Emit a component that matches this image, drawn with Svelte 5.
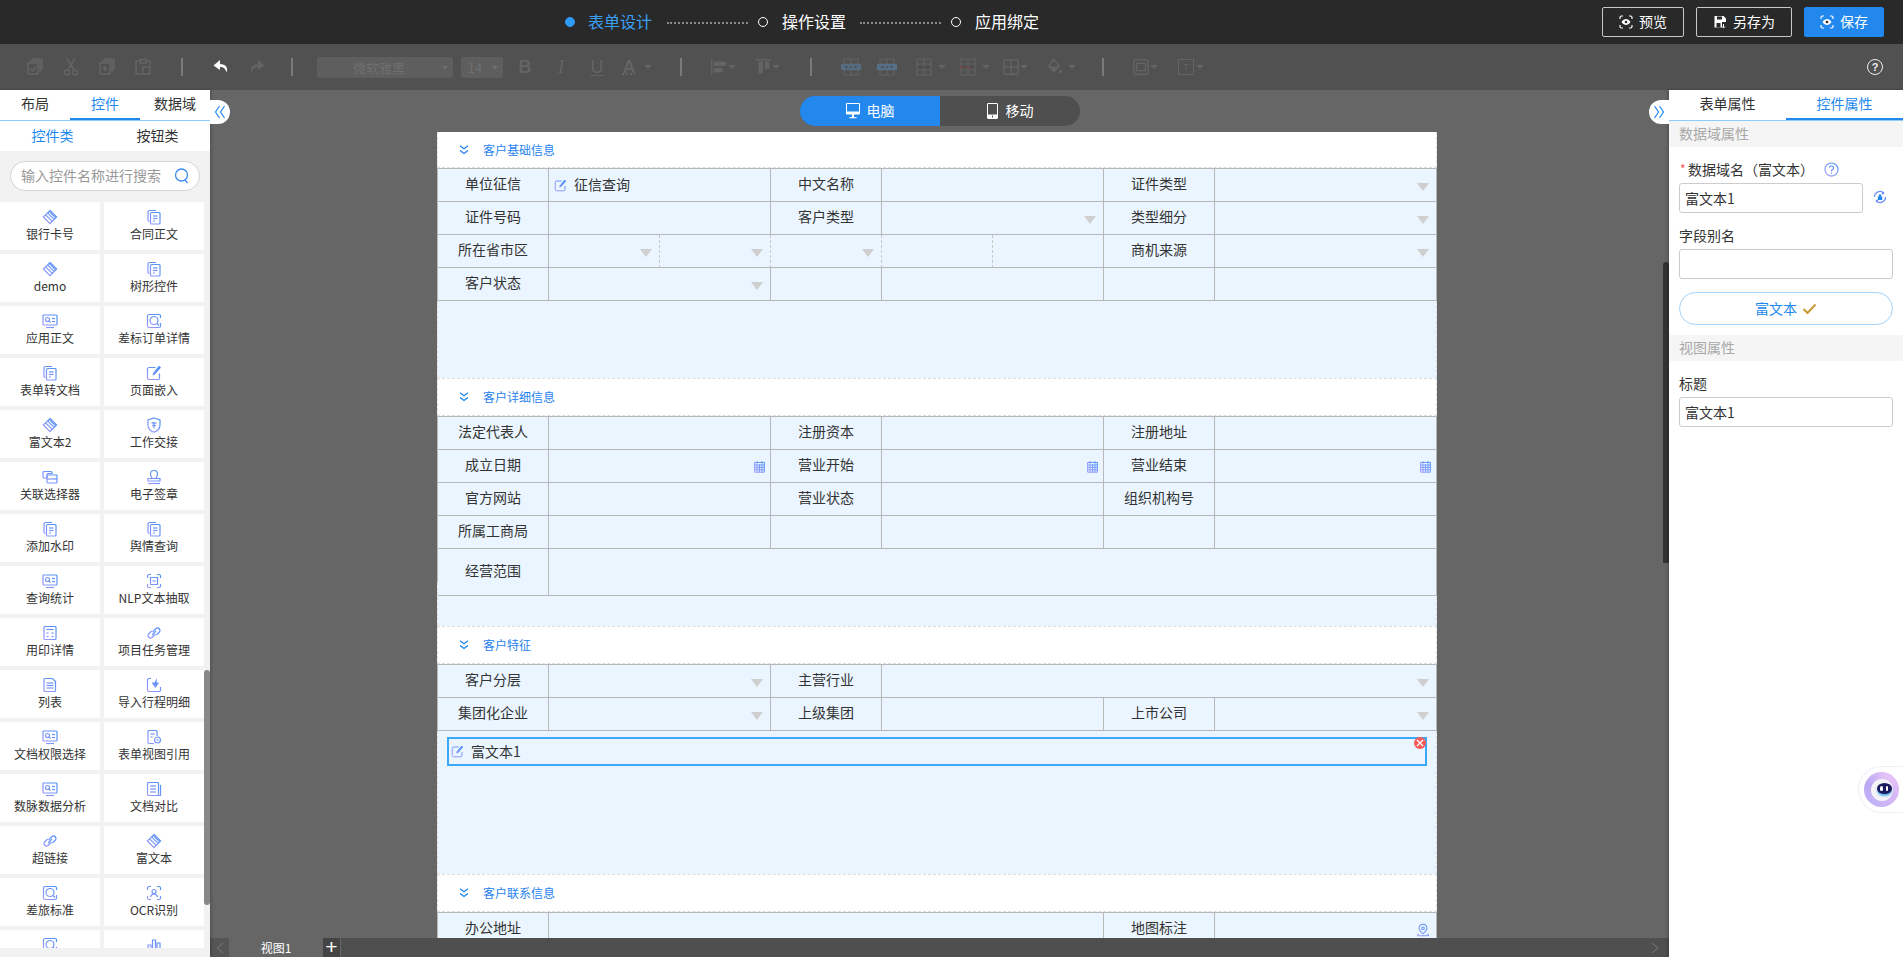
<script>
  const c = (x, y, r) => `M${x - r} ${y}a${r} ${r} 0 1 0 ${r * 2} 0a${r} ${r} 0 1 0 ${-r * 2} 0Z`;

  const icons = {
    gem: { s: ['M8 1.500 14.600 8 8 14.600 1.400 8Z', 'M5.600 3.900 12.100 10.400', 'M3.700 5.800 10.200 12.300', 'M7.200 2.400 13.600 8.800'] },
    doc: { s: ['M2 10V3a1.500 1.500 0 0 1 1.500-1.500H10', 'M2 10v1a1.500 1.500 0 0 0 1.500 1.500', 'M5.500 3.500h7.500a1 1 0 0 1 1 1V14a1 1 0 0 1-1 1H5.500a1 1 0 0 1-1-1V4.500a1 1 0 0 1 1-1Z', 'M7 7h4.500', 'M7 9.500h4.500', 'M7 12h2'] },
    idcard: { s: ['M2 2h12a1 1 0 0 1 1 1v8a1 1 0 0 1-1 1H2a1 1 0 0 1-1-1V3a1 1 0 0 1 1-1Z', c(5.500, 6.500, 2), 'M7 8l1.500 1.500', 'M10 5.500h3', 'M10 8.500h3', 'M4 14.500h8'] },
    find: { s: ['M5 1.500H3A1.500 1.500 0 0 0 1.500 3v10A1.500 1.500 0 0 0 3 14.500h10a1.500 1.500 0 0 0 1.500-1.500v-3', 'M5 1.500h8A1.500 1.500 0 0 1 14.500 3v2', c(8, 7.500, 4), 'M11 10.500l2 2'] },
    edit: { s: ['M13.500 8.500V13a1.500 1.500 0 0 1-1.500 1.500H3A1.500 1.500 0 0 1 1.500 13V4A1.500 1.500 0 0 1 3 2.500h6.500'], f: ['M13 .8 15 2.600 9 9.500 6.500 10.500 7 8Z'] },
    shield: { s: ['M8 1 14 3v5c0 3.500-2.500 6-6 7.200C4.500 14 2 11.500 2 8V3Z', 'M5.500 6h5', 'M6 8.500h4', 'M8 5v6.500'] },
    pair: { s: ['M2 2.500h7a1 1 0 0 1 1 1v1H6a1 1 0 0 0-1 1V9H2a1 1 0 0 1-1-1V3.500a1 1 0 0 1 1-1Z', 'M6 6h8.500a.5.5 0 0 1 .5.5V13a1 1 0 0 1-1 1H6a1 1 0 0 1-1-1V7a1 1 0 0 1 1-1Z', 'M5 10h10'] },
    stamp: { s: ['M6 9.500C6 8 4.500 7.500 4.500 5a3.500 3.500 0 0 1 7 0C11.500 7.500 10 8 10 9.500', 'M2 9.500h12v2.500H2Z', 'M2 14.500h12'] },
    scan: { s: ['M1.500 5V3A1.500 1.500 0 0 1 3 1.500h2', 'M11 1.500h2A1.500 1.500 0 0 1 14.500 3v2', 'M1.500 11v2A1.500 1.500 0 0 0 3 14.500h2', 'M14.500 11v2a1.500 1.500 0 0 1-1.500 1.500h-2', 'M4.500 4.500h7v7h-7Z', 'M6.500 8h3'] },
    calc: { s: ['M3 1.500h10a1 1 0 0 1 1 1v11a1 1 0 0 1-1 1H3a1 1 0 0 1-1-1v-11a1 1 0 0 1 1-1Z', 'M4.500 4.500h7', 'M4.500 8h2', 'M9.500 8h2', 'M4.500 11.500h2', 'M9.500 11.500h2'] },
    link: { s: ['M6.500 7 10 3.500a2.500 2.500 0 0 1 3.500 3.500L10.500 10', 'M9.500 9 6 12.500A2.500 2.500 0 0 1 2.500 9L5.500 6', 'M6 10l4-4'] },
    list: { s: ['M3 1.500h7.500l3 3V13.500a1 1 0 0 1-1 1H3a1 1 0 0 1-1-1v-11a1 1 0 0 1 1-1Z', 'M4.500 6h7', 'M4.500 8.500h7', 'M4.500 11h7'] },
    imp: { s: ['M5 1.500H3A1.500 1.500 0 0 0 1.500 3v10A1.500 1.500 0 0 0 3 14.500h10a1.500 1.500 0 0 0 1.500-1.500v-3'], f: ['M11 1 8.500 5.500H5.500L9.500 11l3.500-5.500H10.500Z'] },
    ref: { s: ['M3 1.500h7a1 1 0 0 1 1 1V7', 'M3 1.500a1 1 0 0 0-1 1v11a1 1 0 0 0 1 1h5', 'M4.500 5h4', 'M4.500 8h2', c(11.500, 11, 3), 'M10.500 11h2'] },
    lines: { s: ['M2.500 1.500h9a1 1 0 0 1 1 1v11a1 1 0 0 1-1 1h-9a1 1 0 0 1-1-1v-11a1 1 0 0 1 1-1Z', 'M14.500 4v10.500H5', 'M4 5h6', 'M4 8h6', 'M4 11h6'] },
    ocr: { s: ['M1.500 5V3A1.500 1.500 0 0 1 3 1.500h2', 'M11 1.500h2A1.500 1.500 0 0 1 14.500 3v2', 'M1.500 11v2A1.500 1.500 0 0 0 3 14.500h2', 'M14.500 11v2a1.500 1.500 0 0 1-1.500 1.500h-2', c(8, 6.500, 2), 'M4.500 12c.5-2 2-3 3.500-3s3 1 3.500 3'] },
    chart: { s: ['M2 15V8h3v7', 'M6.500 15V3h3v12', 'M11 15V6h3v9', 'M1 15h14'] },
    calendar: { s: ['M2 3h12v12H2Z', 'M2 6h12', 'M5 1.500v3', 'M11 1.500v3', 'M5 6v9', 'M8 6v9', 'M11 6v9', 'M2 9h12', 'M2 12h12'] },
    pin: { s: ['M8 1.500a4.500 4.500 0 0 1 4.500 4.500c0 2.500-2.500 4.500-4.500 6.500C6 10.500 3.500 8.500 3.500 6A4.500 4.500 0 0 1 8 1.500Z', c(8, 6, 1.500), 'M3 12.500C2 13 1.500 13.500 2 14.500h12c.5-1-.0-1.500-1-2'] },
    help: { s: [c(8, 8, 7), 'M5.800 6.200A2.200 2.200 0 1 1 8 8.600V10'], f: [c(8, 12, .8)] }
  };

  const leftItems = [
    ['银行卡号', 'gem'], ['合同正文', 'doc'],
    ['demo', 'gem'], ['树形控件', 'doc'],
    ['应用正文', 'idcard'], ['差标订单详情', 'find'],
    ['表单转文档', 'doc'], ['页面嵌入', 'edit'],
    ['富文本2', 'gem'], ['工作交接', 'shield'],
    ['关联选择器', 'pair'], ['电子签章', 'stamp'],
    ['添加水印', 'doc'], ['舆情查询', 'doc'],
    ['查询统计', 'idcard'], ['NLP文本抽取', 'scan'],
    ['用印详情', 'calc'], ['项目任务管理', 'link'],
    ['列表', 'list'], ['导入行程明细', 'imp'],
    ['文档权限选择', 'idcard'], ['表单视图引用', 'ref'],
    ['数脉数据分析', 'idcard'], ['文档对比', 'lines'],
    ['超链接', 'link'], ['富文本', 'gem'],
    ['差旅标准', 'find'], ['OCR识别', 'ocr'],
    ['', 'find'], ['', 'chart']
  ];

  const L = (t) => ({ t, kind: 'label', span: 1 });
  const V = (span = 2, deco = '', text = '', dashed = false) => ({ kind: 'value', span, deco, text, dashed });

  const sections = [
    {
      title: '客户基础信息', first: true,
      rows: [
        L('单位征信'), V(2, '', '征信查询'), L('中文名称'), V(), L('证件类型'), V(2, 'tri'),
        L('证件号码'), V(), L('客户类型'), V(2, 'tri'), L('类型细分'), V(2, 'tri'),
        L('所在省市区'), V(1, 'tri', '', true), V(1, 'tri', '', true), V(1, 'tri', '', true), V(1, '', '', true), V(1), L('商机来源'), V(2, 'tri'),
        L('客户状态'), V(2, 'tri'), V(1), V(2), V(1), V(2)
      ]
    },
    {
      title: '客户详细信息',
      rows: [
        L('法定代表人'), V(), L('注册资本'), V(), L('注册地址'), V(),
        L('成立日期'), V(2, 'calendar'), L('营业开始'), V(2, 'calendar'), L('营业结束'), V(2, 'calendar'),
        L('官方网站'), V(), L('营业状态'), V(), L('组织机构号'), V(),
        L('所属工商局'), V(), V(1), V(2), V(1), V(2),
        { t: '经营范围', kind: 'label', span: 1, tall: true }, { kind: 'value', span: 8, tall: true }
      ]
    },
    {
      title: '客户特征', selected: true,
      rows: [
        L('客户分层'), V(2, 'tri'), L('主营行业'), V(5, 'tri'),
        L('集团化企业'), V(2, 'tri'), L('上级集团'), V(), L('上市公司'), V(2, 'tri')
      ]
    },
    {
      title: '客户联系信息',
      rows: [L('办公地址'), V(5), L('地图标注'), V(2, 'pin')]
    }
  ];
</script>

{#snippet icon(name, size = 16)}
  <svg class="ic" width={size} height={size} viewBox="0 0 16 16" aria-hidden="true">
    {#each icons[name].s as d}
      <path {d} fill="none" stroke="url(#ig)" stroke-width="1.200" />
    {/each}
    {#each icons[name].f ?? [] as d}
      <path {d} fill="url(#ig)" />
    {/each}
  </svg>
{/snippet}

{#snippet scanEye()}
  <svg width="14" height="14" viewBox="0 0 14 14" fill="none" stroke="currentColor" stroke-width="1.200" aria-hidden="true">
    <path d="M1 4V2.500A1.500 1.500 0 0 1 2.500 1H4M10 1h1.500A1.500 1.500 0 0 1 13 2.500V4M1 10v1.500A1.500 1.500 0 0 0 2.500 13H4M10 13h1.500a1.500 1.500 0 0 0 1.500-1.500V10" />
    <path d="M2.500 7C4 4.800 5.500 4 7 4s3 .8 4.500 3C10 9.200 8.500 10 7 10S4 9.200 2.500 7Z" fill="currentColor" stroke="none" />
    <circle cx="7" cy="7" r="1.300" fill="#292929" stroke="none" />
  </svg>
{/snippet}

{#snippet caret(far = false)}
  <span class="caret" class:far></span>
{/snippet}

{#snippet tool(paths, fills = [], size = 20)}
  <svg width={size} height={size} viewBox="0 0 20 20" aria-hidden="true">
    {#each paths as d}<path {d} fill="none" stroke="#646464" stroke-width="1.500" />{/each}
    {#each fills as d}<path {d} fill="#646464" />{/each}
  </svg>
{/snippet}

{#snippet tableTool(band = '', cells = '')}
  <svg width="20" height="18" viewBox="0 0 20 18" aria-hidden="true">
    <path d="M3 1h14v16H3Z M3 6h14 M3 12h14 M10 1v16" fill="none" stroke="#636363" stroke-width="1.200" />
    {#if band}<path d="M0 6h20v6H0Z" fill={band} />{/if}
    {#if cells}<path d="M2 8h4v2H2Z M8 8h4v2H8Z" fill={cells} />{/if}
    <path d="M4 9h3 M9 9h2 M13 9h3" stroke="#454545" stroke-width="1.200" />
  </svg>
{/snippet}

<svg class="defs" width="0" height="0" aria-hidden="true">
  <defs>
    <linearGradient id="ig" gradientUnits="userSpaceOnUse" x1="0" y1="16" x2="16" y2="0">
      <stop offset="0" stop-color="#a99cff" />
      <stop offset="1" stop-color="#3c8df5" />
    </linearGradient>
  </defs>
</svg>

<div class="app">
  <header class="top">
    <div class="steps">
      <span class="dot on"></span>
      <span class="step on">表单设计</span>
      <span class="dash"></span>
      <span class="dot"></span>
      <span class="step">操作设置</span>
      <span class="dash"></span>
      <span class="dot"></span>
      <span class="step">应用绑定</span>
    </div>
    <div class="actions">
      <button class="btn b1">{@render scanEye()}<span>预览</span></button>
      <button class="btn b2">
        <svg width="14" height="14" viewBox="0 0 14 14" aria-hidden="true">
          <path d="M1.500 1h9L13 3.500V7H9v5.500H1.500Z" fill="#fff" />
          <path d="M4 1.500h5v3H4Z M3.500 8h4v4.500h-4Z" fill="#292929" />
          <path d="M10.500 9v4M9 11.500l1.500 1.500 1.500-1.500" stroke="#fff" fill="none" />
        </svg>
        <span>另存为</span>
      </button>
      <button class="btn save">{@render scanEye()}<span>保存</span></button>
    </div>
  </header>

  <div class="toolbar">
    <span class="t first">{@render tool(['M7 2h10v11', 'M5 4h10v11', 'M3 6h10v11H3Z', 'M5.500 11.500 8 14l3-4.500'])}</span>
    <span class="t">{@render tool(['M6 1.500 13 13', 'M14 1.500 7 13', 'M3.500 15.500a2.500 2.500 0 1 0 5 0a2.500 2.500 0 1 0-5 0Z', 'M11.500 15.500a2.500 2.500 0 1 0 5 0a2.500 2.500 0 1 0-5 0Z'])}</span>
    <span class="t">{@render tool(['M7 2h10v11', 'M5 4h10v11', 'M3 6h10v11H3Z', 'M8 9v5', 'M5.500 11.500h5'])}</span>
    <span class="t">{@render tool(['M7 4H3v13h6', 'M13 4h4v4', 'M7 2.500h6V6H7Z', 'M10 10h7v7h-7Z'])}</span>
    <span class="sep s1"></span>
    <span class="t s2">
      <svg width="18" height="18" viewBox="0 0 18 18" aria-hidden="true"><path d="M8 2 1.500 7.500 8 12V9c3.500 0 5.500 1.500 6.500 5.500C16.500 9.500 13.500 6 8 6Z" fill="#fff" /></svg>
    </span>
    <span class="t">
      <svg width="18" height="18" viewBox="0 0 18 18" aria-hidden="true"><path d="M10 2l6.500 5.500L10 12V9C6.500 9 4.500 10.500 3.500 14.500 1.500 9.500 4.500 6 10 6Z" fill="#646464" /></svg>
    </span>
    <span class="sep s3"></span>
    <span class="select font">微软雅黑<i class="mini"></i></span>
    <span class="select size">14<i class="mini"></i></span>
    <span class="t letter b first-letter">B</span>
    <span class="t letter it">I</span>
    <span class="t letter un">U</span>
    <span class="tc letter-a"><span class="letter ua">A</span>{@render caret(true)}</span>
    <span class="sep s4"></span>
    <span class="tc s5">{@render tool(['M2 1v18'], ['M4 4h12a2 2 0 0 1 0 5H4Z', 'M4 11h8a2 2 0 0 1 0 5H4Z'], 18)}{@render caret()}</span>
    <span class="tc">{@render tool(['M1 2h18'], ['M5 4h5v13H5Z', 'M12 4h5v8h-5Z'], 18)}{@render caret()}</span>
    <span class="sep s6"></span>
    <span class="t s7">{@render tableTool('#566a80')}</span>
    <span class="t">{@render tableTool('#566e86')}</span>
    <span class="tc s8">{@render tableTool()}{@render caret(true)}</span>
    <span class="tc">{@render tableTool('', '#7c4848')}{@render caret(true)}</span>
    <span class="tc">{@render tool(['M4 2h12a2 2 0 0 1 2 2v12a2 2 0 0 1-2 2H4a2 2 0 0 1-2-2V4a2 2 0 0 1 2-2Z', 'M10 2v16', 'M2 10h16'], [], 18)}{@render caret()}</span>
    <span class="tc">{@render tool(['M9 2 3 9l6 6 6-6Z', 'M6 1l3 3'], ['M3.500 9.500h11L9 15Z', 'M16.500 12c1 1.500 1.500 2.500 1.500 3.500a1.500 1.500 0 0 1-3 0c0-1 .5-2 1.500-3.500Z'], 18)}{@render caret(true)}</span>
    <span class="sep s9"></span>
    <span class="tc s10">{@render tool(['M4 2h12a2 2 0 0 1 2 2v12a2 2 0 0 1-2 2H4a2 2 0 0 1-2-2V4a2 2 0 0 1 2-2Z', 'M5 6h10v8H5Z'], [], 18)}{@render caret()}</span>
    <span class="tc">
      <span class="tbox">T</span>{@render caret()}
    </span>
    <span class="helpbtn">?</span>
  </div>

  <div class="main">
    <aside class="left">
      <div class="tabs three">
        <span>布局</span><span class="active">控件</span><span>数据域</span>
      </div>
      <div class="subtabs"><span class="active">控件类</span><span>按钮类</span></div>
      <div class="searchbar">
        <div class="search">
          <span class="ph">输入控件名称进行搜索</span>
          <svg width="16" height="18" viewBox="0 0 16 18" fill="none" stroke="#3b8df0" stroke-width="1.300" aria-hidden="true">
            <path d="M1.500 8a6 6 0 1 0 12 0a6 6 0 1 0-12 0Z" /><path d="M11 13l2.500 3" />
          </svg>
        </div>
      </div>
      <div class="list">
        {#each leftItems as [name, ic]}
          <div class="card">
            {@render icon(ic, 16)}
            <span class="cardname">{name}</span>
          </div>
        {/each}
      </div>
      <div class="leftscroll"></div>
    </aside>

    <section class="center">
      <button class="collapse cl" aria-label="收起左栏">
        <svg width="12" height="14" viewBox="0 0 12 14" fill="none" stroke="#2288ee" stroke-width="1.200"><path d="M5.500 1 1.500 7l4 6M10.500 1l-4 6 4 6" /></svg>
      </button>
      <button class="collapse cr" aria-label="收起右栏">
        <svg width="12" height="14" viewBox="0 0 12 14" fill="none" stroke="#2288ee" stroke-width="1.200"><path d="M1.500 1l4 6-4 6M6.500 1l4 6-4 6" /></svg>
      </button>

      <div class="device">
        <span class="dev on">
          <svg width="14" height="16" viewBox="0 0 14 16" aria-hidden="true"><path d="M.5.500h13V11H.5Z" fill="none" stroke="#fff" /><path d="M.5 8.500h13V11H.5Z M6 11h2v3H6Z M3.500 14h7v1.200h-7Z" fill="#fff" /></svg>
          <span>电脑</span>
        </span>
        <span class="dev">
          <svg width="11" height="16" viewBox="0 0 11 16" aria-hidden="true"><path d="M1 .5h9a.5.5 0 0 1 .5.500v14a.5.5 0 0 1-.5.500H1a.5.5 0 0 1-.5-.500V1A.5.5 0 0 1 1 .5Z" fill="none" stroke="#fff" /><path d="M.5 11.500h10V15H.5Z" fill="#fff" /><path d="M5 12.500h1v2H5Z" fill="#4f4f4f" /></svg>
          <span>移动</span>
        </span>
      </div>

      <div class="canvaswrap">
        <div class="form">
          {#each sections as s}
            <div class="section" class:first={s.first}>
              <div class="head">
                <svg width="10" height="10" viewBox="0 0 10 10" fill="none" stroke="#1f83ee" stroke-width="1.300" aria-hidden="true"><path d="M1 .8l4 3 4-3M1 5.500l4 3 4-3" /></svg>
                <span>{s.title}</span>
              </div>
              <div class="grid">
                {#each s.rows as cell}
                  <div
                    class="cell {cell.kind}"
                    class:dashed={cell.dashed}
                    class:tall={cell.tall}
                    class:span1={cell.span === 1}
                    class:span2={cell.span === 2}
                    class:span5={cell.span === 5}
                    class:span8={cell.span === 8}
                  >
                    {#if cell.kind === 'label'}
                      {cell.t}
                    {:else}
                      {#if cell.text}
                        {@render icon('edit', 13)}<span class="valtext">{cell.text}</span>
                      {/if}
                      {#if cell.deco === 'tri'}<i class="tri"></i>{/if}
                      {#if cell.deco === 'calendar'}<span class="deco">{@render icon('calendar', 13)}</span>{/if}
                      {#if cell.deco === 'pin'}<span class="deco pin">{@render icon('pin', 14)}</span>{/if}
                    {/if}
                  </div>
                {/each}
              </div>
              <div class="fill">
                {#if s.selected}
                  <div class="picked">
                    {@render icon('edit', 13)}<span class="valtext">富文本1</span>
                    <span class="del">
                      <svg width="8" height="8" viewBox="0 0 8 8" stroke="#fff" stroke-width="1.300" aria-hidden="true"><path d="M1 1l6 6M7 1 1 7" /></svg>
                    </span>
                  </div>
                {/if}
              </div>
            </div>
          {/each}
        </div>
      </div>

      <div class="centerscroll"></div>

      <div class="viewbar">
        <span class="vprev">
          <svg width="8" height="12" viewBox="0 0 8 12" fill="none" stroke="#777" aria-hidden="true"><path d="M7 1 1 6l6 5" /></svg>
        </span>
        <span class="vtab">视图1</span>
        <span class="vadd">+</span>
        <span class="vnext">
          <svg width="8" height="12" viewBox="0 0 8 12" fill="none" stroke="#777" aria-hidden="true"><path d="M1 1l6 5-6 5" /></svg>
        </span>
      </div>
    </section>

    <aside class="right">
      <div class="tabs two">
        <span>表单属性</span><span class="active">控件属性</span>
      </div>
      <div class="prop-head">数据域属性</div>
      <div class="fields">
        <div class="flabel"><em>*</em>数据域名（富文本）<span class="qm">{@render icon('help', 15)}</span></div>
        <div class="inputrow">
          <input class="short" value="富文本1" readonly />
          <svg class="sync" width="14" height="14" viewBox="0 0 14 14" aria-hidden="true">
            <path d="M1.500 7a5.500 5.500 0 0 1 9.500-3.800M12.500 7a5.500 5.500 0 0 1-9.500 3.800" fill="none" stroke="#6f8ff5" stroke-width="1.300" />
            <path d="M9.500 1.500 11.500 4 8.500 4.500Z M4.500 12.500 2.500 10 5.500 9.500Z" fill="#6f8ff5" />
            <path d="M4.800 6.500h4.400v3.500H4.800Z M5.800 4.500h2.400v2H5.800Z" fill="#2288ee" />
          </svg>
        </div>
        <div class="flabel next">字段别名</div>
        <input value="" readonly />
        <button class="pill">
          <span>富文本</span>
          <svg width="15" height="12" viewBox="0 0 15 12" fill="none" stroke="#c99a33" stroke-width="2" aria-hidden="true"><path d="M1.500 6 5.500 10 13.500 1.500" /></svg>
        </button>
      </div>
      <div class="prop-head second">视图属性</div>
      <div class="fields">
        <div class="flabel">标题</div>
        <input value="富文本1" readonly />
      </div>

      <div class="robot">
        <span class="ring"><span class="face"><span class="eyes"><i></i><i></i></span></span></span>
      </div>
    </aside>
  </div>
</div>

<style>
  :global(body) {
    margin: 0;
    overflow: hidden;
    background: #666;
  }
  .defs { position: absolute; }
  .app {
    width: 1903px;
    height: 957px;
    display: flex;
    flex-direction: column;
    overflow: hidden;
    font-family: "Noto Sans CJK SC", "Noto Sans", sans-serif;
    font-size: 14px;
    color: #333;
  }
  svg { display: block; flex: none; }

  /* top bar */
  .top {
    height: 44px;
    flex: none;
    background: #292929;
    display: flex;
    align-items: center;
    padding: 0 19px 0 565px;
    box-sizing: border-box;
  }
  .steps { display: flex; align-items: center; height: 44px; }
  .dot {
    width: 10px; height: 10px; box-sizing: border-box;
    border: 1.500px solid #fff; border-radius: 50%;
    margin-right: 14px;
  }
  .dot.on { background: #2f9bf5; border-color: #2f9bf5; margin-right: 13px; }
  .step { font-size: 16px; color: #fff; width: 64px; white-space: nowrap; line-height: 42px; height: 44px; }
  .step.on { color: #3aa0f5; width: 65px; }
  .dash {
    width: 81px; height: 0; margin: 2px 14px 0 14px;
    border-top: 2px dotted #8a8a8a;
  }
  .dash + .dot { margin-left: -4px; }
  .actions { margin-left: auto; display: flex; gap: 12px; }
  .btn {
    height: 30px; box-sizing: border-box;
    border: 1px solid #c8c8c8; border-radius: 2px;
    background: transparent; color: #fff;
    font: inherit; font-size: 14px;
    display: flex; align-items: center; justify-content: center; gap: 6px;
    padding: 0;
  }
  .btn span { margin-top: -2px; }
  .b1 { width: 82px; }
  .b2 { width: 96px; }
  .save { width: 80px; background: #2288ee; border-color: #2288ee; }

  /* toolbar */
  .toolbar {
    height: 46px;
    flex: none;
    background: #515151;
    display: flex;
    align-items: center;
    color: #646464;
    box-sizing: border-box;
  }
  .t { width: 36px; display: flex; justify-content: center; align-items: center; flex: none; }
  .t.first { margin-left: 17px; }
  .sep { width: 2px; height: 18px; background: #7a7a7a; flex: none; }
  .s1 { margin-left: 20px; margin-right: 20px; }
  .s3 { margin-left: 16px; margin-right: 24px; }
  .select {
    height: 21px; background: #5e5e5e; border-radius: 2px;
    position: relative; flex: none;
    font-size: 13px; color: #6f6f6f;
    display: flex; align-items: center; justify-content: center;
    box-sizing: border-box;
  }
  .font { width: 136px; padding-right: 12px; }
  .size { width: 42px; margin-left: 8px; padding-right: 14px; }
  .mini {
    position: absolute; right: 5px; top: 9px;
    border: 3px solid transparent; border-top: 4px solid #6f6f6f; border-bottom: 0;
  }
  .letter { font-size: 18px; font-family: "Liberation Sans", sans-serif; color: #646464; }
  .first-letter { margin-left: 4px; }
  .b { font-weight: 700; }
  .it { font-family: "Liberation Serif", serif; font-style: italic; }
  .un { text-decoration: underline; text-underline-offset: 2px; }
  .ua { font-weight: 700; text-decoration: underline dotted; width: 22px; text-align: center; flex: none; }
  .tc { width: 44px; flex: none; display: flex; align-items: center; padding-left: 2px; box-sizing: border-box; }
  .letter-a { margin-left: 3px; padding-left: 0; }
  .caret {
    width: 0; height: 0; margin-left: 0;
    border: 4px solid transparent; border-top: 4px solid #646464; border-bottom: 0;
    flex: none;
  }
  .caret.far { margin-left: 4px; }
  .s4 { margin-left: 18px; margin-right: 26px; }
  .s6 { margin-left: 14px; margin-right: 21px; }
  .s8 { margin-left: 7px; }
  .s9 { margin-left: 14px; margin-right: 26px; }
  .tbox {
    width: 14px; height: 14px; margin: 0 2px 0 2px;
    border: 1px solid #646464; color: #646464;
    font-size: 9px; line-height: 14px; text-align: center; flex: none;
    font-family: "Liberation Sans", sans-serif;
  }
  .helpbtn {
    width: 14px; height: 14px; margin-left: auto; margin-right: 20px;
    border: 1px solid #eee; border-radius: 50%;
    color: #eee; font-size: 11px; line-height: 14px; text-align: center;
    font-family: "Liberation Sans", sans-serif; font-weight: 700;
  }

  /* layout */
  .main { flex: 1; display: flex; min-height: 0; }

  /* shared tabs */
  .tabs {
    height: 31px; box-sizing: border-box; flex: none;
    display: flex; background: #fff;
    border-bottom: 1px solid #8ccbfa;
  }
  .tabs span {
    flex: 1; text-align: center; line-height: 27px; font-size: 14px; color: #333;
    height: 30px; box-sizing: border-box;
  }
  .tabs .active { color: #2288ee; border-bottom: 2px solid #2288ee; }

  /* left */
  .left {
    width: 210px; flex: none; position: relative;
    background: #f2f2f2;
    display: flex; flex-direction: column;
    padding-bottom: 9px; box-sizing: border-box;
    box-shadow: 1px 0 3px rgba(0, 0, 0, .25);
    z-index: 2;
  }
  .subtabs { height: 30px; flex: none; display: flex; background: #fff; }
  .subtabs span { flex: 1; text-align: center; line-height: 28px; font-size: 14px; }
  .subtabs .active { color: #2288ee; }
  .searchbar { height: 50px; flex: none; padding: 10px; box-sizing: border-box; }
  .search {
    height: 30px; box-sizing: border-box;
    border: 1px solid #d4d4d4; border-radius: 15px; background: #fff;
    display: flex; align-items: center; justify-content: space-between;
    padding: 0 9px 0 10px;
  }
  .ph { color: #999; font-size: 14px; white-space: nowrap; margin-top: -2px; }
  .list {
    flex: 1; min-height: 0; overflow: hidden;
    padding-top: 1px;
    display: grid;
    grid-template-columns: 100px 100px;
    grid-auto-rows: 48px;
    column-gap: 4px; row-gap: 4px;
  }
  .card {
    background: #fff;
    display: flex; flex-direction: column; align-items: center;
    padding-top: 7px; box-sizing: border-box;
  }
  .cardname { font-size: 12px; line-height: 18px; color: #333; white-space: nowrap; }
  .leftscroll {
    position: absolute; left: 204px; top: 580px; width: 6px; height: 235px;
    background: #888; border-radius: 3px;
  }

  /* center */
  .center {
    flex: 1; min-width: 0; position: relative;
    background: #666;
    display: flex; flex-direction: column;
  }
  .collapse {
    position: absolute; top: 10px; width: 20px; height: 24px;
    background: #fff; border: 0; padding: 0;
    display: flex; align-items: center; justify-content: center;
    z-index: 3;
  }
  .cl { left: 0; border-radius: 0 12px 12px 0; }
  .cr { right: 0; border-radius: 12px 0 0 12px; }
  .device {
    flex: none; margin: 6px auto 6px 590px;
    width: 280px; height: 30px;
    display: flex;
    border-radius: 15px; overflow: hidden;
    background: #4f4f4f;
  }
  .dev {
    width: 140px; display: flex; align-items: center; justify-content: center; gap: 8px;
    color: #fff; font-size: 14px;
  }
  .dev span { margin-top: -2px; }
  .dev.on { background: #2288ee; gap: 7px; }
  .canvaswrap {
    flex: 1; min-height: 0; overflow: hidden;
    display: flex; justify-content: center;
    padding-right: 5px;
  }
  .form { width: 1000px; flex: none; }
  .section {
    height: 248px;
    display: flex; flex-direction: column;
    background: #eaf5ff;
  }
  .section.first { height: 246px; }
  .head {
    height: 38px; flex: none; box-sizing: border-box;
    background: #fff;
    border: 1px dashed #dcdcdc;
    padding-left: 21px;
    display: flex; align-items: center; gap: 14px;
    font-size: 12px; color: #1f83ee;
  }
  .head span { margin-top: -1px; }
  .first .head { height: 36px; border-top: 0; }
  .grid {
    flex: none;
    display: grid;
    grid-template-columns: repeat(9, 111px);
    grid-auto-rows: 33px;
    border-left: 1px solid #b8b8b8;
    border-top: 1px solid #b8b8b8;
  }
  .cell {
    position: relative;
    box-sizing: border-box;
    border-right: 1px solid #b8b8b8;
    border-bottom: 1px solid #b8b8b8;
    background: #eaf5ff;
    display: flex; align-items: center;
    font-size: 14px; color: #333;
  }
  .cell.label { justify-content: center; padding-bottom: 4px; }
  .cell.value { padding-left: 5px; }
  .cell.dashed { border-right: 1px dashed #c8c8c8; }
  .cell.tall { height: 47px; }
  .span1 { grid-column: span 1; }
  .span2 { grid-column: span 2; }
  .span5 { grid-column: span 5; }
  .span8 { grid-column: span 8; }
  .valtext { margin-left: 7px; white-space: nowrap; margin-top: -2px; }
  .tri {
    position: absolute; right: 7px; top: 14px;
    border-left: 6px solid transparent;
    border-right: 6px solid transparent;
    border-top: 8px solid #cfcfcf;
  }
  .deco { position: absolute; right: 4px; top: 10px; }
  .deco.pin { right: 6px; top: 10px; }
  .fill {
    flex: 1; min-height: 0;
    box-sizing: border-box;
    border-left: 1px dashed #dcdcdc;
    border-right: 1px dashed #dcdcdc;
    padding: 6px 9px 0;
  }
  .picked {
    position: relative;
    height: 29px; box-sizing: border-box;
    border: 2px solid #3aa9f9;
    display: flex; align-items: center;
    padding-left: 2px;
    font-size: 14px; color: #333;
  }
  .del {
    position: absolute; top: -2px; right: -1px;
    width: 12px; height: 12px; border-radius: 50%;
    background: #f55b5b;
    display: flex; align-items: center; justify-content: center;
  }
  .centerscroll {
    position: absolute; right: 0; top: 172px; width: 6px; height: 301px;
    background: #333; border-radius: 3px 3px 0 0;
  }
  .viewbar {
    height: 19px; flex: none; position: relative;
    background: #4f4f4f;
    display: flex; align-items: stretch;
    z-index: 1;
  }
  .vprev { width: 19px; background: #555; display: flex; align-items: center; justify-content: center; }
  .vtab {
    width: 94px; background: #666; color: #fff; font-size: 12px;
    text-align: center; line-height: 19px;
  }
  .vadd {
    width: 17px; background: #444; color: #fff; text-align: center;
    font: 400 21px/18px "Liberation Sans", sans-serif;
    border-right: 1px solid #666;
  }
  .vnext { margin-left: auto; width: 18px; display: flex; align-items: center; }

  /* right */
  .right {
    width: 234px; flex: none; position: relative;
    background: #fff;
    box-shadow: -1px 0 3px rgba(0, 0, 0, .25);
    z-index: 2;
  }
  .prop-head {
    height: 26px; background: #f5f5f5;
    color: #a8a8a8; font-size: 14px; line-height: 24px;
    padding-left: 10px;
  }
  .prop-head.second { margin-top: 10px; }
  .fields { padding: 13px 10px 0; display: flex; flex-direction: column; }
  .flabel {
    height: 20px; line-height: 18px; font-size: 14px; color: #333;
    display: flex; align-items: flex-start; margin-bottom: 3px; white-space: nowrap;
  }
  .flabel.next { margin-top: 13px; }
  .flabel em { color: #f55; font-style: normal; font-size: 12px; width: 9px; flex: none; padding-left: 1px; box-sizing: border-box; }
  .qm { margin-left: 10px; margin-top: 2px; }
  input {
    width: 214px; height: 30px; box-sizing: border-box;
    border: 1px solid #ccc; border-radius: 3px;
    font: inherit; font-size: 14px; color: #333;
    padding: 0 5px; outline: none; background: #fff;
  }
  input.short { width: 184px; }
  .inputrow { display: flex; align-items: center; }
  .sync { margin-left: 10px; margin-top: -2px; }
  .pill {
    margin-top: 13px; width: 214px; height: 33px; box-sizing: border-box;
    border: 1px solid #9fd3fb; border-radius: 17px; background: #fff;
    color: #2288ee; font: inherit; font-size: 14px;
    display: flex; align-items: center; justify-content: center; gap: 5px; padding: 0;
  }
  .pill span { margin-top: -2px; }
  .robot {
    position: absolute; right: 0; top: 676px;
    width: 45px; height: 47px; box-sizing: border-box;
    border: 1px solid #eef0f6; border-right: 0;
    border-radius: 24px 0 0 24px;
    background: #fff;
    display: flex; align-items: center; padding-left: 5px;
  }
  .ring {
    width: 35px; height: 35px; border-radius: 50%;
    background: conic-gradient(from 200deg, #c4b4f7, #bba8f5, #e6c4f7, #d9b8f7, #c4b4f7);
    display: flex; align-items: center; justify-content: center; flex: none;
  }
  .face {
    width: 22px; height: 22px; border-radius: 50%; background: #f4f4f6;
    display: flex; align-items: center; justify-content: center; position: relative;
  }
  .eyes {
    width: 15px; height: 11px; border-radius: 50%;
    background: #1c1a5e;
    display: flex; align-items: center; justify-content: center; gap: 3px;
    position: absolute; left: 6px; top: 4px;
    box-shadow: 0 2px 2px #5bb3ee;
  }
  .eyes i { width: 2.500px; height: 5px; background: #fff; border-radius: 2px; }
</style>
